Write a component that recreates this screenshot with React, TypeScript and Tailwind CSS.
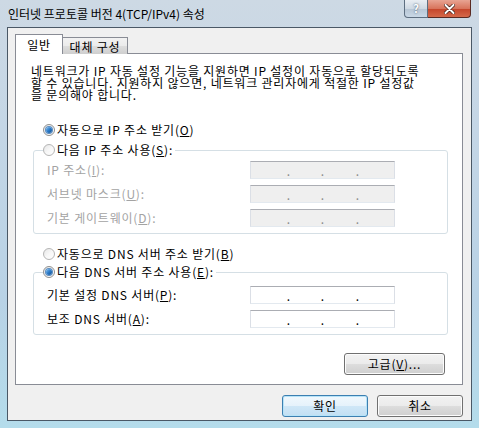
import React from "react";

const font = { fontFamily: '"Noto Sans CJK KR", "Noto Sans", sans-serif' };

function Radio({ checked, dim }: { checked?: boolean; dim?: boolean }) {
  return (
    <span
      className={`relative inline-flex h-[12px] w-[12px] shrink-0 items-center justify-center rounded-full border ${
        dim ? "border-[#b5b5b5]" : "border-[#8e8f8f]"
      } bg-gradient-to-br from-[#e6e6e6] via-[#f7f7f7] to-[#ffffff]`}
    >
      {checked && (
        <span className="h-[6px] w-[6px] rounded-full bg-gradient-to-br from-[#7ec0f2] via-[#2c7bc8] to-[#0e4f92] ring-1 ring-[#5a8cc0]" />
      )}
    </span>
  );
}

function RadioRow({ checked, dim, children }: { checked?: boolean; dim?: boolean; children: React.ReactNode }) {
  return (
    <div className="flex h-[16px] items-center gap-[2px]">
      <Radio checked={checked} dim={dim} />
      <span className="whitespace-nowrap text-[12px] leading-[16px] tracking-[0.8px] text-black">{children}</span>
    </div>
  );
}

function IpBox({ disabled }: { disabled?: boolean }) {
  return (
    <div
      className={`flex h-[18px] w-[145px] items-end border border-[#abadb3] border-l-[#dbdfe6] border-r-[#dbdfe6] border-b-[#e3e9ef] pb-[1px] pl-[4px] text-[12px] leading-[12px] ${
        disabled ? "bg-[#efefef] text-[#8a8a8a]" : "bg-white text-black"
      }`}
    >
      <span className="w-[35px] text-right">.</span>
      <span className="w-[34px] text-right">.</span>
      <span className="w-[35px] text-right">.</span>
    </div>
  );
}

function FieldRow({ label, disabled }: { label: React.ReactNode; disabled?: boolean }) {
  return (
    <div className="flex h-[18px] items-center pl-[13px]">
      <span
        className={`w-[203px] whitespace-nowrap text-[12px] leading-[16px] tracking-[0.8px] ${
          disabled ? "text-[#a3a3a3]" : "text-black"
        }`}
      >
        {label}
      </span>
      <IpBox disabled={disabled} />
    </div>
  );
}

function VistaButton({ children, primary }: { children: React.ReactNode; primary?: boolean }) {
  return (
    <button
      className={`flex h-[22px] w-full items-center justify-center rounded-[3px] border text-[12px] leading-[16px] tracking-[0.8px] text-black ${
        primary
          ? "border-[#3c7fb1] bg-[linear-gradient(#f1f8fd_0%,#e5f2fb_50%,#cfe7f7_51%,#c2dff3_100%)] shadow-[inset_0_0_0_1px_#b6e3f8]"
          : "border-[#707070] bg-[linear-gradient(#f2f2f2_0%,#ebebeb_50%,#dddddd_51%,#cfcfcf_100%)] shadow-[inset_0_0_0_1px_#fcfcfc]"
      }`}
    >
      {children}
    </button>
  );
}

export default function App() {
  return (
    <div
      className="relative h-[428px] w-[479px] overflow-hidden bg-[linear-gradient(180deg,#cdd9e4_0%,#c4d6e6_30%,#b8d2e6_70%,#b4dceb_100%)]"
      style={font}
    >
      {/* title bar */}
      <div className="flex h-[27px] items-center pl-[8px] text-[12px] leading-[16px] text-black">
        인터넷 프로토콜 버전 4(TCP/IPv4) 속성
      </div>
      <div className="absolute right-[8px] top-0 flex">
        <div className="flex h-[18px] w-[24px] items-center justify-center rounded-bl-[4px] border border-t-0 border-[#5d6e80] bg-[linear-gradient(#e9eef3_0%,#cfd9e3_50%,#b6c5d4_51%,#c9d8e6_100%)] text-[11px] font-bold leading-none text-white [text-shadow:0_0_2px_#34495e]">
          ?
        </div>
        <div className="flex h-[18px] w-[43px] items-center justify-center rounded-br-[4px] border border-l-0 border-t-0 border-[#5a2a22] bg-[linear-gradient(#e8a493_0%,#d8745c_50%,#c4442a_51%,#d5694a_100%)]">
          <svg width="11" height="10" viewBox="0 0 11 10">
            <path d="M1.5 1 L9.5 9 M9.5 1 L1.5 9" stroke="#3b1810" strokeWidth="3.4" strokeLinecap="round" />
            <path d="M1.5 1 L9.5 9 M9.5 1 L1.5 9" stroke="#ffffff" strokeWidth="2" strokeLinecap="round" />
          </svg>
        </div>
      </div>

      {/* client area */}
      <div className="mx-[7px] h-[394px] border border-[#4a5866] bg-[#f0f0f0] pl-[7px] pr-[8px] pt-[6px]">
        {/* tabs */}
        <div className="relative z-10 -mb-px flex h-[20px] items-end">
          <div className="flex h-[20px] w-[48px] items-start justify-center border border-b-0 border-[#898c95] bg-white pt-[2px] text-[12px] leading-[16px] tracking-[0.8px] text-black">
            일반
          </div>
          <div className="flex h-[17px] w-[65px] items-start justify-center border border-b-0 border-l-0 border-[#898c95] bg-[linear-gradient(#f2f2f2_0%,#ebebeb_50%,#dddddd_51%,#cfcfcf_100%)] pt-[1px] text-[12px] leading-[15px] tracking-[0.8px] text-black">
            대체 구성
          </div>
        </div>

        {/* panel */}
        <div className="flex h-[332px] w-[448px] flex-col border border-[#898c95] bg-white">
          <p className="mt-[11px] whitespace-nowrap pl-[15px] text-[12px] leading-[12px] tracking-[0.8px] text-black">
            네트워크가 IP 자동 설정 기능을 지원하면 IP 설정이 자동으로 할당되도록
            <br />
            할 수 있습니다. 지원하지 않으면, 네트워크 관리자에게 적절한 IP 설정값
            <br />을 문의해야 합니다.
          </p>

          <div className="mt-[21px] pl-[27px]">
            <RadioRow checked>
              자동으로 IP 주소 받기(<span className="underline">O</span>)
            </RadioRow>
          </div>

          <fieldset className="ml-[17px] mt-[4px] w-[415px] rounded-[3px] border border-[#d5dfe5] pb-[6px]">
            <legend className="ml-[9px] pr-[2px]">
              <RadioRow dim>
                다음 IP 주소 사용(<span className="underline">S</span>):
              </RadioRow>
            </legend>
            <div className="flex flex-col gap-[6px] pt-[3px]">
              <FieldRow
                disabled
                label={
                  <>
                    IP 주소(<span className="underline">I</span>):
                  </>
                }
              />
              <FieldRow
                disabled
                label={
                  <>
                    서브넷 마스크(<span className="underline">U</span>):
                  </>
                }
              />
              <FieldRow
                disabled
                label={
                  <>
                    기본 게이트웨이(<span className="underline">D</span>):
                  </>
                }
              />
            </div>
          </fieldset>

          <div className="mt-[12px] pl-[27px]">
            <RadioRow dim>
              자동으로 DNS 서버 주소 받기(<span className="underline">B</span>)
            </RadioRow>
          </div>

          <fieldset className="ml-[17px] mt-[2px] w-[415px] rounded-[3px] border border-[#d5dfe5] pb-[6px]">
            <legend className="ml-[9px] pr-[2px]">
              <RadioRow checked>
                다음 DNS 서버 주소 사용(<span className="underline">E</span>):
              </RadioRow>
            </legend>
            <div className="flex flex-col gap-[6px] pt-[6px]">
              <FieldRow
                label={
                  <>
                    기본 설정 DNS 서버(<span className="underline">P</span>):
                  </>
                }
              />
              <FieldRow
                label={
                  <>
                    보조 DNS 서버(<span className="underline">A</span>):
                  </>
                }
              />
            </div>
          </fieldset>

          <div className="mt-[18px] flex justify-end pr-[17px]">
            <div className="w-[101px]">
              <VistaButton>
                고급(<span className="underline">V</span>)...
              </VistaButton>
            </div>
          </div>
        </div>

        {/* dialog buttons */}
        <div className="mt-[10px] flex w-[448px] justify-end gap-[9px]">
          <div className="w-[86px]">
            <VistaButton primary>확인</VistaButton>
          </div>
          <div className="w-[86px]">
            <VistaButton>취소</VistaButton>
          </div>
        </div>
      </div>
    </div>
  );
}
